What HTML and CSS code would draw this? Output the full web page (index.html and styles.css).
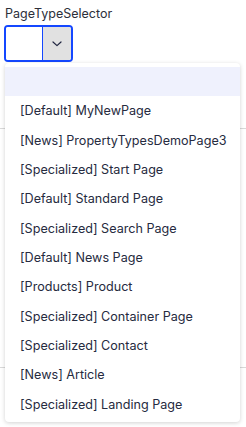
FILE: index.html
```html
<!DOCTYPE html>
<html lang="en">
<head>
  <meta charset="UTF-8">
  <meta name="viewport" content="width=device-width, initial-scale=1.0">
  <title>PageTypeSelector</title>
  <link rel="stylesheet" href="styles.css">
</head>
<body>
  <div class="field">
    <label class="field-label">PageTypeSelector</label>
    <div class="select-box">
      <div class="select-value"></div>
      <div class="select-toggle">
        <svg width="10" height="6" viewBox="0 0 10 6">
          <path d="M1 1 L5 4.6 L9 1" fill="none" stroke="#1f2540" stroke-width="1.2" stroke-linecap="round" stroke-linejoin="round"/>
        </svg>
      </div>
    </div>

    <ul class="options">
      <li class="option active">&nbsp;</li>
      <li class="option">[Default] MyNewPage</li>
      <li class="option">[News] PropertyTypesDemoPage3</li>
      <li class="option">[Specialized] Start Page</li>
      <li class="option">[Default] Standard Page</li>
      <li class="option">[Specialized] Search Page</li>
      <li class="option">[Default] News Page</li>
      <li class="option">[Products] Product</li>
      <li class="option">[Specialized] Container Page</li>
      <li class="option">[Specialized] Contact</li>
      <li class="option">[News] Article</li>
      <li class="option">[Specialized] Landing Page</li>
    </ul>
  </div>

  <!-- conteudo por tras do menu -->
  <div class="rows">
    <div class="row row-1"></div>
    <div class="row row-2"></div>
    <div class="row-rest"></div>
  </div>
</body>
</html>
```

FILE: styles.css
```css
html, body {
  min-height: 100%;
}
body {
  margin: 0;
  padding: 0;
  font-family: Inter, "Noto Sans", sans-serif;
  color: #262b40;
  background-color: #fff;
}
.field {
  position: relative;
  padding: 6px 0 0 4px;
}
.field-label {
  display: block;
  font-size: 12.5px;
  line-height: 16px;
  color: #2c2f3a;
  margin-left: 1px;
  margin-bottom: 3px;
}
.select-box {
  display: flex;
  width: 65px;
  height: 33px;
  border: 2px solid #1447ff;
  border-radius: 4px;
  overflow: hidden;
}
.select-value {
  width: 36px;
  background-color: #fff;
  border-right: 1px solid #1447ff;
}
.select-toggle {
  flex: 1;
  background-color: #e1e1e1;
  display: flex;
  align-items: center;
  justify-content: center;
}
.options {
  position: absolute;
  top: 63px;
  left: 5px;
  width: 235px;
  margin: 0;
  padding: 4px 0 3px 0;
  list-style: none;
  background-color: #fff;
  border-radius: 4px;
  box-shadow: 0 1px 4px rgba(0, 0, 0, 0.18);
  z-index: 2;
}
.option {
  padding: 6px 15px;
  line-height: 17.33px;
  font-size: 12.6px;
  color: #262b40;
  white-space: nowrap;
}
.option.active {
  background-color: #eff1fd;
}
.row {
  border-bottom: 1px solid #d9d9d9;
}
.row-1 {
  height: 66px;
}
.row-2 {
  height: 238px;
}
.row-rest {
  height: 70px;
}
```
